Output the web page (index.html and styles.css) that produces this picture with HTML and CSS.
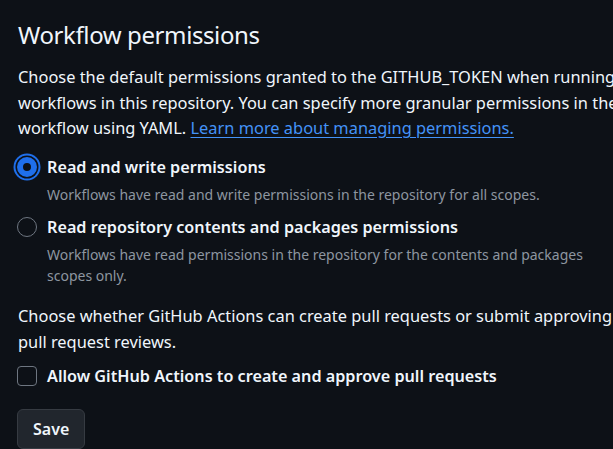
FILE: index.html
```html
<!DOCTYPE html>
<html>
<head>
<meta charset="utf-8">
<link rel="stylesheet" href="styles.css">
</head>
<body>
<main class="page">
  <h2 class="title">Workflow permissions</h2>
  <p class="intro">Choose the default permissions granted to the GITHUB_TOKEN when running<br>workflows in this repository. You can specify more granular permissions in the<br>workflow using YAML. <a href="#" class="link">Learn more about managing permissions.</a></p>

  <div class="options">
    <label class="option">
      <span class="radio radio-on"></span>
      <span class="opt-body">
        <span class="opt-title">Read and write permissions</span>
        <span class="opt-note">Workflows have read and write permissions in the repository for all scopes.</span>
      </span>
    </label>
    <label class="option">
      <span class="radio"></span>
      <span class="opt-body">
        <span class="opt-title">Read repository contents and packages permissions</span>
        <span class="opt-note">Workflows have read permissions in the repository for the contents and packages<br>scopes only.</span>
      </span>
    </label>
  </div>

  <p class="intro second">Choose whether GitHub Actions can create pull requests or submit approving<br>pull request reviews.</p>

  <label class="check-row">
    <span class="checkbox"></span>
    <span class="opt-title">Allow GitHub Actions to create and approve pull requests</span>
  </label>

  <button class="btn">Save</button>
</main>
</body>
</html>
```

FILE: styles.css
```css
html, body {
  margin: 0;
  padding: 0;
  background: #0d1117;
  overflow: hidden;
}
body {
  font-family: "Noto Sans", "Open Sans", sans-serif;
  color: #f0f6fc;
  width: 613px;
  height: 449px;
}
.page {
  padding: 19px 0 0 18px;
  white-space: nowrap;
}
.title {
  margin: 0;
  font-size: 24px;
  font-weight: 400;
  line-height: 32px;
  letter-spacing: -0.4px;
}
.intro {
  margin: 13px 0 0;
  font-size: 16.4px;
  line-height: 25.5px;
}
.link {
  color: #4493f8;
  text-decoration: underline;
  text-underline-offset: 3px;
}
.options {
  margin-top: 14px;
  display: flex;
  flex-direction: column;
  gap: 10px;
}
.option {
  display: flex;
  gap: 10px;
  margin-left: -1px;
}
.radio {
  box-sizing: border-box;
  width: 20px;
  height: 20px;
  border-radius: 50%;
  border: 1px solid #6e7681;
  margin-top: 2px;
  flex: none;
}
.radio-on {
  border: 6px solid #1f6feb;
  background: #0d1117;
  box-shadow: 0 0 0 1.5px #0d1117, 0 0 0 3.5px #1f6feb;
}
.opt-body {
  display: flex;
  flex-direction: column;
}
.opt-title {
  font-size: 16.2px;
  font-weight: 600;
  line-height: 24px;
}
.opt-note {
  font-size: 14px;
  line-height: 20.5px;
  color: #8d96a0;
  margin-top: 6px;
}
.second {
  margin-top: 17px;
}
.check-row {
  display: flex;
  gap: 10px;
  align-items: center;
  margin-top: 10px;
  margin-left: -1px;
}
.checkbox {
  box-sizing: border-box;
  width: 20px;
  height: 20px;
  border: 1px solid #6e7681;
  border-radius: 4px;
  flex: none;
}
.btn {
  display: block;
  margin-top: 21px;
  margin-left: -1px;
  height: 40px;
  padding: 0 15px;
  background: #21262d;
  border: 1px solid #363b42;
  border-radius: 6px;
  color: #f0f6fc;
  font-family: inherit;
  font-size: 16px;
  font-weight: 600;
}
```
